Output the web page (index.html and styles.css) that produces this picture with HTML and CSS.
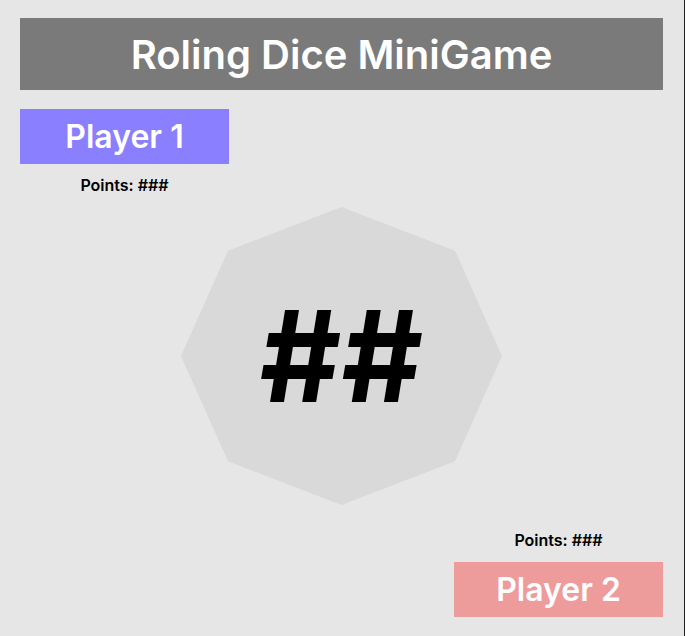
FILE: index.html
```html
<!DOCTYPE html>
<html lang="en">
<head>
<meta charset="utf-8">
<title>Roling Dice MiniGame</title>
<link rel="stylesheet" href="styles.css">
</head>
<body>
<main class="game">
  <h1 class="title">Roling Dice MiniGame</h1>
  <section class="player player-one">
    <div class="player-name">Player 1</div>
    <div class="points">Points: ###</div>
  </section>
  <div class="dice">
    <span class="dice-value">##</span>
  </div>
  <section class="player player-two">
    <div class="points">Points: ###</div>
    <div class="player-name">Player 2</div>
  </section>
</main>
</body>
</html>
```
FILE: styles.css
```css
html, body {
  margin: 0;
  padding: 0;
}
body {
  width: 684px;
  height: 636px;
  background: #e6e6e6;
  border-right: 1px solid #1e1e1e;
  font-family: Inter, "Noto Sans", sans-serif;
  overflow: hidden;
}
.game {
  display: flex;
  flex-direction: column;
  padding: 18px 21px 0 20px;
}
.title {
  margin: 0;
  height: 72px;
  background: #7a7a7a;
  color: #ffffff;
  font-size: 40px;
  font-weight: 600;
  display: flex;
  align-items: center;
  justify-content: center;
}
.player {
  width: 209px;
  display: flex;
  flex-direction: column;
  align-items: center;
}
.player-one {
  margin-top: 19px;
  align-self: flex-start;
}
.player-two {
  margin-top: 26px;
  align-self: flex-end;
}
.player-name {
  width: 100%;
  height: 55px;
  display: flex;
  align-items: center;
  justify-content: center;
  color: #ffffff;
  font-size: 32px;
  font-weight: 600;
}
.player-one .player-name {
  background: #8a7fff;
}
.player-two .player-name {
  background: #ee9b9b;
}
.points {
  font-size: 16px;
  font-weight: 600;
  color: #000000;
  line-height: 19px;
}
.player-one .points {
  margin-top: 12px;
}
.player-two .points {
  margin-bottom: 12px;
}
.dice {
  margin-top: 12px;
  align-self: center;
  width: 321px;
  height: 298px;
  background: #d9d9d9;
  clip-path: polygon(50% 0, 85.36% 14.64%, 100% 50%, 85.36% 85.36%, 50% 100%, 14.64% 85.36%, 0 50%, 14.64% 14.64%);
  display: flex;
  align-items: center;
  justify-content: center;
}
.dice-value {
  font-size: 126px;
  font-weight: 700;
  color: #000000;
  line-height: 1;
}
```
